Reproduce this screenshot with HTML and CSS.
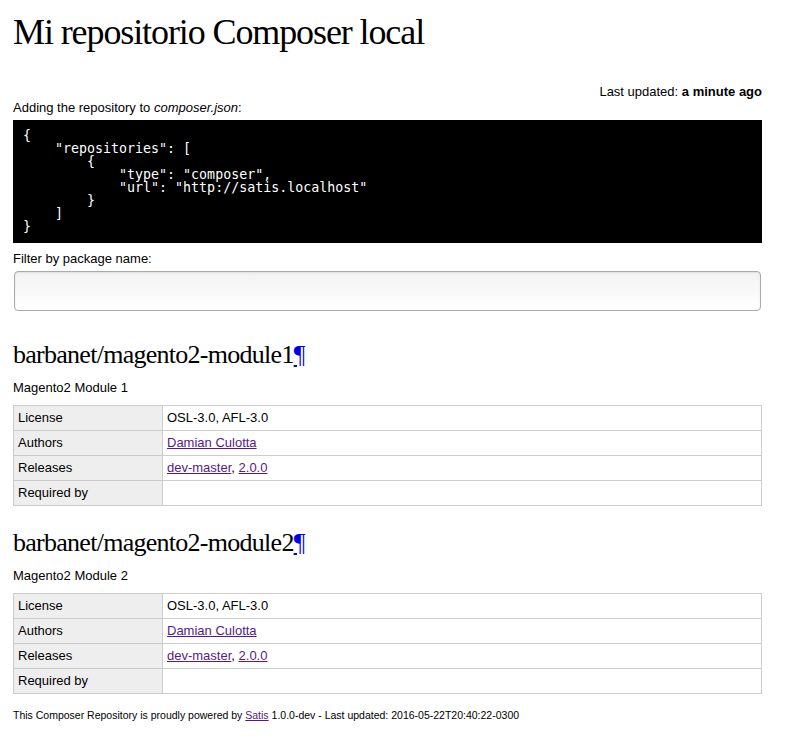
FILE: index.html
```html
<!DOCTYPE html>
<html>
<head>
<meta charset="utf-8">
<title>Mi repositorio Composer local</title>
<link rel="stylesheet" href="styles.css">
</head>
<body>
<div class="page">
  <h1 class="title">Mi repositorio Composer local</h1>
  <p class="updated">Last updated: <strong>a minute ago</strong></p>
  <p class="adding">Adding the repository to <em>composer.json</em>:</p>
  <pre class="code">{
    "repositories": [
        {
            "type": "composer",
            "url": "http://satis.localhost"
        }
    ]
}</pre>
  <label class="filter-label" for="search">Filter by package name:</label>
  <input class="filter" id="search" type="text">

  <div class="package">
    <h2 class="pkg-title">barbanet/magento2-module1<a class="anchor" href="#">¶</a></h2>
    <p class="desc">Magento2 Module 1</p>
    <table class="details">
      <tr><th>License</th><td>OSL-3.0, AFL-3.0</td></tr>
      <tr><th>Authors</th><td><a href="#">Damian Culotta</a></td></tr>
      <tr><th>Releases</th><td><a href="#">dev-master</a>, <a href="#">2.0.0</a></td></tr>
      <tr><th>Required by</th><td></td></tr>
    </table>
  </div>

  <div class="package">
    <h2 class="pkg-title">barbanet/magento2-module2<a class="anchor" href="#">¶</a></h2>
    <p class="desc">Magento2 Module 2</p>
    <table class="details">
      <tr><th>License</th><td>OSL-3.0, AFL-3.0</td></tr>
      <tr><th>Authors</th><td><a href="#">Damian Culotta</a></td></tr>
      <tr><th>Releases</th><td><a href="#">dev-master</a>, <a href="#">2.0.0</a></td></tr>
      <tr><th>Required by</th><td></td></tr>
    </table>
  </div>

  <footer class="footer">This Composer Repository is proudly powered by <a href="#">Satis</a> 1.0.0-dev - Last updated: 2016-05-22T20:40:22-0300</footer>
</div>
</body>
</html>
```
FILE: styles.css
```css
html, body {
  margin: 0;
  padding: 0;
  background: #fff;
}
body {
  font-family: "Liberation Sans", Arial, sans-serif;
  font-size: 13px;
  color: #000;
}
.page {
  width: 749px;
  padding: 0 0 0 13px;
}
.title {
  font-family: "Liberation Serif", "Times New Roman", serif;
  font-weight: normal;
  font-size: 36px;
  letter-spacing: -1.1px;
  line-height: 44px;
  margin: 10px 0 0 0;
}
.updated {
  text-align: right;
  margin: 30px 0 0 0;
  line-height: 15px;
}
.adding {
  margin: 1px 0 0 0;
  line-height: 15px;
}
.code {
  background: #000;
  color: #fff;
  font-family: "DejaVu Sans Mono", monospace;
  font-size: 13.3px;
  line-height: 13px;
  margin: 5px 0 0 0;
  padding: 9px 10px 10px 10px;
}
.filter-label {
  display: block;
  line-height: 15px;
  margin-top: 8px;
}
.filter {
  display: block;
  box-sizing: border-box;
  width: 747px;
  height: 40px;
  margin: 5px 0 0 1px;
  border: 1px solid #aaa;
  border-radius: 4px;
  background: linear-gradient(#f2f2f2, #fff);
  box-shadow: inset 0 1px 2px rgba(0,0,0,0.08);
  font: 13px "Liberation Sans", sans-serif;
  padding: 0 8px;
}
.package {
  margin-top: 29px;
}
.package + .package {
  margin-top: 22px;
}
.pkg-title {
  font-family: "Liberation Serif", "Times New Roman", serif;
  font-weight: normal;
  font-size: 26px;
  letter-spacing: -0.73px;
  line-height: 30px;
  margin: 0;
}
.anchor {
  color: #00e;
  text-decoration: underline;
  letter-spacing: 0;
}
.desc {
  margin: 10px 0 0 0;
  line-height: 15px;
}
.details {
  border-collapse: collapse;
  width: 749px;
  margin-top: 10px;
}
.details th, .details td {
  border: 1px solid #ccc;
  padding: 4px 4px;
  line-height: 16px;
  height: 16px;
  text-align: left;
  font-weight: normal;
}
.details th {
  background: #eee;
  width: 140px;
}
.details a, .footer a {
  color: #551a8b;
}
.footer {
  font-size: 10.5px;
  line-height: 13px;
  margin-top: 15px;
  padding-bottom: 10px;
}
```
